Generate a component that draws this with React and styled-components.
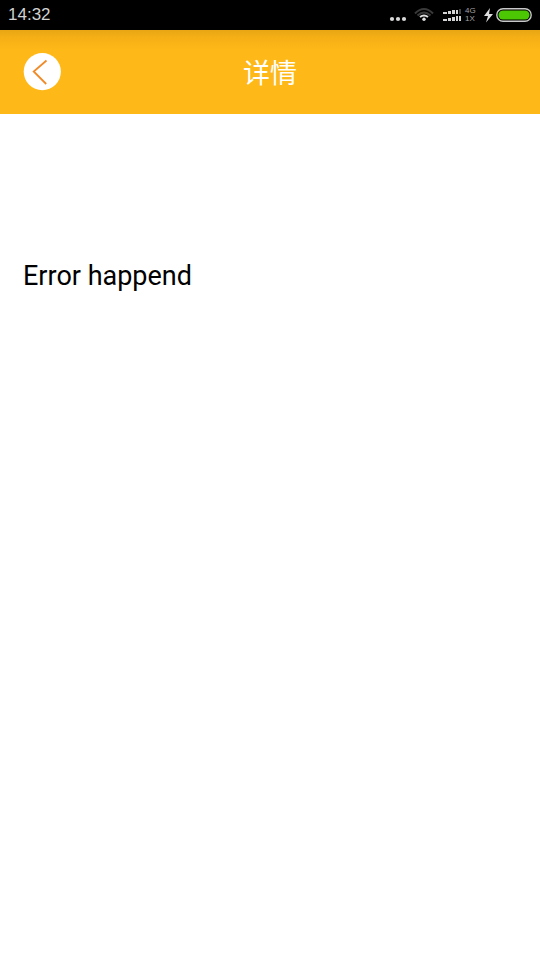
import React from "react";
import styled, { createGlobalStyle } from "styled-components";

const GlobalStyle = createGlobalStyle`
  *, *::before, *::after { box-sizing: border-box; }
  body {
    margin: 0;
    background: #fff;
    color: #000;
    font-family: Roboto, "Noto Sans CJK SC", sans-serif;
  }
`;

const Screen = styled.div`
  display: flex;
  flex-direction: column;
  min-height: 100vh;
`;

const StatusBar = styled.div`
  display: flex;
  align-items: center;
  justify-content: space-between;
  height: 30px;
  padding: 0 8px;
  background: #000;
  color: #d2d2d2;
`;

const Clock = styled.time`
  font-family: "Liberation Sans", Arial, sans-serif;
  font-size: 17px;
  line-height: 30px;
`;

const StatusIcons = styled.div`
  display: flex;
  align-items: center;
`;

const StatusIcon = styled.svg`
  display: block;
  flex: none;
  margin-right: ${(p) => p.$gap || 0}px;
`;

const NetworkType = styled.div`
  display: flex;
  flex-direction: column;
  width: 14px;
  margin-right: 4px;
  color: #a0a0a0;
  font-family: "Liberation Sans", Arial, sans-serif;
  font-size: 8px;
  line-height: 8px;
`;

const Header = styled.header`
  display: grid;
  grid-template-columns: 1fr auto 1fr;
  align-items: center;
  height: 84px;
  padding: 0 23px;
  background: linear-gradient(#e8a614, #f6b016 8px, #feb817 20px);
`;

const BackButton = styled.button`
  justify-self: start;
  padding: 0;
  border: 0;
  background: none;
  cursor: pointer;
`;

const BackIcon = styled.svg`
  display: block;
`;

const Title = styled.h1`
  margin: 0;
  color: #fff;
  font-family: "Noto Sans CJK SC", sans-serif;
  font-size: 27px;
  font-weight: 400;
  line-height: 40px;
`;

const Content = styled.main`
  flex: 1;
  padding: 144px 23px 0;
`;

const Message = styled.p`
  margin: 0;
  font-size: 27px;
  line-height: 36px;
`;

function MoreIcon() {
  return (
    <StatusIcon $gap={7} width="18" height="30" fill="#d8d8d8" aria-hidden="true">
      <circle cx="3" cy="19" r="2.1" />
      <circle cx="9" cy="19" r="2.1" />
      <circle cx="15" cy="19" r="2.1" />
    </StatusIcon>
  );
}

function WifiIcon() {
  return (
    <StatusIcon $gap={9} width="20" height="30" fill="none" strokeWidth="2" aria-label="Wi-Fi">
      <path d="M1 13.5Q10 4.5 19 13.5" stroke="#3a3a3a" />
      <path d="M3.5 15.5Q10 9.5 16.5 15.5" stroke="#3a3a3a" />
      <path d="M6 17Q10 14 14 17" stroke="#dedede" />
      <circle cx="10" cy="19.2" r="1.7" fill="#dedede" />
    </StatusIcon>
  );
}

function SignalIcon() {
  return (
    <StatusIcon $gap={3} width="19" height="30" fill="#d4d4d4" aria-label="Signal">
      <path d="M0 12h4v2H0zM5 11h3v3H5zM9 10h3v4H9zM13 10h2v4h-2z" />
      <path d="M16 9h2v5h-2z" fill="#444" />
      <path d="M0 19h4v2H0zM5 18h3v3H5zM9 17h3v4H9zM13 16h2v5h-2zM16 16h2v5h-2z" />
    </StatusIcon>
  );
}

function ChargeIcon() {
  return (
    <StatusIcon $gap={2} width="11" height="30" fill="#dedede" aria-label="Charging">
      <path d="M7 8 1 16h4l-2 6.5L10 14H6z" />
    </StatusIcon>
  );
}

function BatteryIcon() {
  return (
    <StatusIcon width="36" height="30" aria-label="Battery full">
      <rect x="0.8" y="8.8" width="34.4" height="12.4" rx="6.2" fill="#000" stroke="#c8c8c8" strokeWidth="1.4" />
      <rect x="2.5" y="10.5" width="31" height="9" rx="4.5" fill="#4bc703" />
    </StatusIcon>
  );
}

export default function App() {
  return (
    <Screen>
      <GlobalStyle />
      <StatusBar>
        <Clock>14:32</Clock>
        <StatusIcons>
          <MoreIcon />
          <WifiIcon />
          <SignalIcon />
          <NetworkType>
            <span>4G</span>
            <span>1X</span>
          </NetworkType>
          <ChargeIcon />
          <BatteryIcon />
        </StatusIcons>
      </StatusBar>
      <Header>
        <BackButton type="button" aria-label="返回">
          <BackIcon width="38" height="38" viewBox="0 0 38 38" fill="none">
            <circle cx="19.3" cy="18.6" r="18.6" fill="#fff" />
            <path d="M23.5 7.5 10.7 18.5 23.2 31" stroke="#f08a28" strokeWidth="1.8" />
          </BackIcon>
        </BackButton>
        <Title>详情</Title>
      </Header>
      <Content>
        <Message>Error happend</Message>
      </Content>
    </Screen>
  );
}
